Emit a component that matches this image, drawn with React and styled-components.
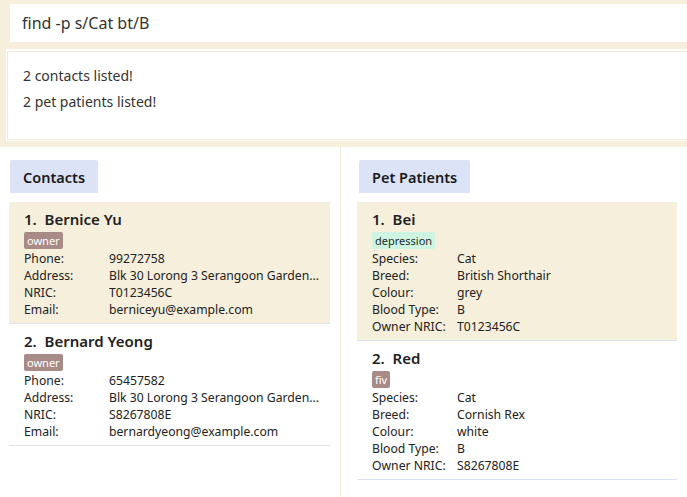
import React from "react";
import styled, { createGlobalStyle } from "styled-components";

const Global = createGlobalStyle`
  html, body { margin: 0; padding: 0; }
  body {
    width: 687px;
    height: 497px;
    overflow: hidden;
    font-family: "Noto Sans", "Open Sans", sans-serif;
    background: #ffffff;
  }
`;

const CREAM = "#f5efdb";

const Page = styled.div`
  display: flex;
  flex-direction: column;
  height: 497px;
`;

const TopArea = styled.div`
  background: ${CREAM};
  padding: 4px 0 6px 6px;
  display: flex;
  flex-direction: column;
  gap: 7px;
`;

const CommandBox = styled.div`
  margin-left: 4px;
  height: 38px;
  background: #fff;
  display: flex;
  align-items: center;
  padding-left: 12px;
  font-size: 16px;
  color: #333;
`;

const ResultOuter = styled.div`
  background: #fff;
  padding: 2px 0 1px 1px;
  height: 92px;
  box-sizing: border-box;
  display: flex;
`;

const ResultInner = styled.div`
  flex: 1;
  border: 1px solid #f1ead6;
  border-right: none;
  padding: 11px 0 0 15px;
  font-size: 14px;
  line-height: 26px;
  color: #333;
`;

const Panels = styled.div`
  flex: 1;
  display: grid;
  grid-template-columns: 340px 1px 1fr;
`;

const Divider = styled.div`
  background: #f3ecd8;
`;

const Panel = styled.div`
  padding: 13px 10px 0 ${(p) => p.$left}px;
  display: flex;
  flex-direction: column;
`;

const PanelTitle = styled.div`
  align-self: flex-start;
  margin-left: ${(p) => p.$offset}px;
  height: 33px;
  padding: 0 13px;
  background: #dde3f7;
  display: flex;
  align-items: center;
  font-size: 14.5px;
  font-weight: 600;
  color: #1a1a1a;
  border-radius: 2px 2px 0 0;
`;

const List = styled.div`
  margin-top: 9px;
  display: flex;
  flex-direction: column;
`;

const Card = styled.div`
  background: ${(p) => (p.$selected ? CREAM : "#fff")};
  padding: 7px 6px 5px 15px;
  border-bottom: 1px solid ${(p) => p.$line};
  display: flex;
  flex-direction: column;
`;

const Name = styled.div`
  font-size: 15px;
  font-weight: 600;
  line-height: 20px;
  color: #222;
  white-space: pre;
`;

const Tag = styled.span`
  align-self: flex-start;
  margin-top: 3px;
  height: 17px;
  padding: 0 3px;
  border-radius: 2px;
  font-size: 11px;
  line-height: 17px;
  background: ${(p) => p.$bg};
  color: ${(p) => p.$fg};
`;

const Rows = styled.div`
  display: grid;
  grid-template-columns: ${(p) => p.$label}px 1fr;
  margin-top: 1px;
  font-size: 12.2px;
  line-height: 17px;
  color: #222;
`;

const Cell = styled.span`
  white-space: nowrap;
  overflow: hidden;
`;

const contacts = [
  {
    name: "Bernice Yu",
    phone: "99272758",
    address: "Blk 30 Lorong 3 Serangoon Garden...",
    nric: "T0123456C",
    email: "berniceyu@example.com",
  },
  {
    name: "Bernard Yeong",
    phone: "65457582",
    address: "Blk 30 Lorong 3 Serangoon Garden...",
    nric: "S8267808E",
    email: "bernardyeong@example.com",
  },
];

const pets = [
  {
    name: "Bei",
    tag: "depression",
    tagBg: "#cdf5e2",
    tagFg: "#1f2a2a",
    species: "Cat",
    breed: "British Shorthair",
    colour: "grey",
    blood: "B",
    owner: "T0123456C",
  },
  {
    name: "Red",
    tag: "fiv",
    tagBg: "#a88a87",
    tagFg: "#ffffff",
    species: "Cat",
    breed: "Cornish Rex",
    colour: "white",
    blood: "B",
    owner: "S8267808E",
  },
];

function FieldRows({ label, fields }) {
  return (
    <Rows $label={label}>
      {fields.map(([k, v]) => (
        <React.Fragment key={k}>
          <Cell>{k}</Cell>
          <Cell>{v}</Cell>
        </React.Fragment>
      ))}
    </Rows>
  );
}

export default function App() {
  return (
    <>
      <Global />
      <Page>
        <TopArea>
          <CommandBox>find -p s/Cat bt/B</CommandBox>
          <ResultOuter>
            <ResultInner>
              <div>2 contacts listed!</div>
              <div>2 pet patients listed!</div>
            </ResultInner>
          </ResultOuter>
        </TopArea>
        <Panels>
          <Panel $left={9}>
            <PanelTitle $offset={1}>Contacts</PanelTitle>
            <List>
              {contacts.map((c, i) => (
                <Card key={c.name} $selected={i === 0} $line="#dfe4ea">
                  <Name>{`${i + 1}.  ${c.name}`}</Name>
                  <Tag $bg="#a88a87" $fg="#ffffff">owner</Tag>
                  <FieldRows
                    label={85}
                    fields={[
                      ["Phone:", c.phone],
                      ["Address:", c.address],
                      ["NRIC:", c.nric],
                      ["Email:", c.email],
                    ]}
                  />
                </Card>
              ))}
            </List>
          </Panel>
          <Divider />
          <Panel $left={16}>
            <PanelTitle $offset={2}>Pet Patients</PanelTitle>
            <List>
              {pets.map((p, i) => (
                <Card key={p.name} $selected={i === 0} $line="#dbe2f5">
                  <Name>{`${i + 1}.  ${p.name}`}</Name>
                  <Tag $bg={p.tagBg} $fg={p.tagFg}>{p.tag}</Tag>
                  <FieldRows
                    label={85}
                    fields={[
                      ["Species:", p.species],
                      ["Breed:", p.breed],
                      ["Colour:", p.colour],
                      ["Blood Type:", p.blood],
                      ["Owner NRIC:", p.owner],
                    ]}
                  />
                </Card>
              ))}
            </List>
          </Panel>
        </Panels>
      </Page>
    </>
  );
}
